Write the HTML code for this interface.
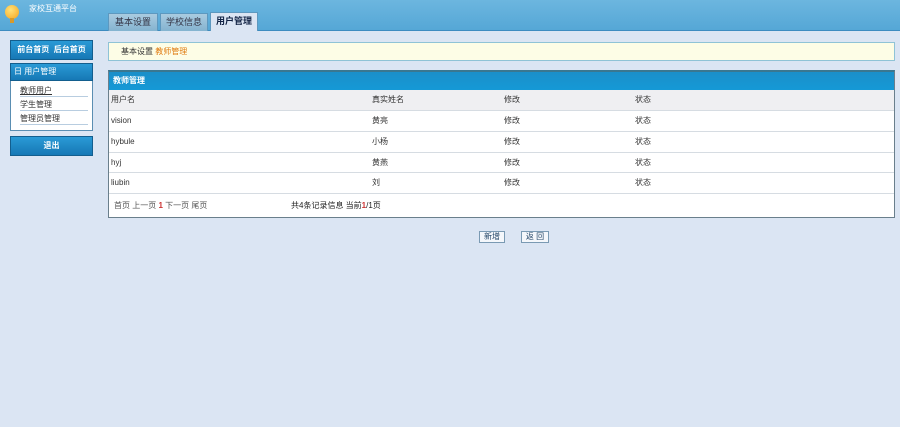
<!DOCTYPE html>
<html><head><meta charset="utf-8"><style>
*{margin:0;padding:0;box-sizing:border-box}
body{width:900px;height:427px;background:#dbe5f3;font-family:"Liberation Sans","Noto Sans CJK SC",sans-serif;font-size:8px;color:#333;position:relative;overflow:hidden}
.a{position:absolute}
.top{left:0;top:0;width:900px;height:31px;background:linear-gradient(#6cb6df,#55a7d6);border-bottom:1px solid #3d8cc0}
.tab{top:13px;height:18px;background:linear-gradient(#a9cbe0,#84b3d0);border:1px solid #5d98bf;border-bottom:none;color:#334;font-size:9px;text-align:center;line-height:17px}
.tab.on{background:#dbe5f3;color:#124;font-weight:bold}
.bbtn{background:linear-gradient(#2a9ad6,#1678b5);color:#fff;font-weight:bold;text-align:center;border:1px solid #135e8e}
.tbl{left:108px;top:70px;width:787px;height:148px;background:#fff;border:1px solid #6a7f8c;border-top:2px solid #3a7790}
.row{position:absolute;left:0;width:785px;border-bottom:1px solid #d6dce2}
.row span{position:absolute;top:0}
.btn{top:231px;height:12px;border:1px solid #7a9ab3;background:#f4f7fb;color:#246;text-align:center;line-height:10px;font-size:8px}
</style></head><body>
<div class="a top"></div>
<div class="a" style="left:5px;top:5px;width:14px;height:14px;border-radius:50%;background:radial-gradient(circle at 40% 35%,#ffe27a,#f4a21c)"></div>
<div class="a" style="left:10px;top:18px;width:4px;height:5px;background:#d89a2a"></div>
<div class="a" style="left:29px;top:3px;color:#fff;font-size:8px">家校互通平台</div>
<div class="a tab" style="left:108px;width:50px">基本设置</div>
<div class="a tab" style="left:160px;width:48px">学校信息</div>
<div class="a tab on" style="left:210px;width:48px;top:12px;height:19px">用户管理</div>

<div class="a bbtn" style="left:10px;top:40px;width:83px;height:20px;line-height:18px">前台首页&nbsp; 后台首页</div>
<div class="a" style="left:10px;top:63px;width:83px;height:68px;background:#fff;border:1px solid #5a8eb2"></div>
<div class="a bbtn" style="left:10px;top:63px;width:83px;height:18px;line-height:16px;text-align:left;padding-left:3px;font-weight:normal">日 用户管理</div>
<div class="a" style="left:20px;top:85px;width:68px;border-bottom:1px solid #b8cde0;height:12px;text-decoration:underline">教师用户</div>
<div class="a" style="left:20px;top:99px;width:68px;border-bottom:1px solid #b8cde0;height:12px">学生管理</div>
<div class="a" style="left:20px;top:113px;width:68px;border-bottom:1px solid #b8cde0;height:12px">管理员管理</div>
<div class="a bbtn" style="left:10px;top:136px;width:83px;height:20px;line-height:18px">退出</div>

<div class="a" style="left:108px;top:42px;width:787px;height:19px;background:#fdfde6;border:1px solid #8fc3d6;line-height:17px;padding-left:12px">基本设置 <span style="color:#e07a10">教师管理</span></div>

<div class="a tbl">
<div class="row" style="top:0;height:18px;background:linear-gradient(#1b8fc9,#1599d6);border:none;color:#fff;font-weight:bold;line-height:17px;padding-left:4px">教师管理</div>
<div class="row" style="top:18px;height:21px;background:#efeff2;line-height:20px"><span style="left:2px">用户名</span><span style="left:263px">真实姓名</span><span style="left:395px">修改</span><span style="left:526px">状态</span></div>
<div class="row" style="top:39px;height:21px;line-height:20px"><span style="left:2px">vision</span><span style="left:263px">黄亮</span><span style="left:395px">修改</span><span style="left:526px">状态</span></div>
<div class="row" style="top:60px;height:21px;line-height:20px"><span style="left:2px">hybule</span><span style="left:263px">小杨</span><span style="left:395px">修改</span><span style="left:526px">状态</span></div>
<div class="row" style="top:81px;height:20px;line-height:20px"><span style="left:2px">hyj</span><span style="left:263px">黄燕</span><span style="left:395px">修改</span><span style="left:526px">状态</span></div>
<div class="row" style="top:101px;height:21px;line-height:20px"><span style="left:2px">liubin</span><span style="left:263px">刘</span><span style="left:395px">修改</span><span style="left:526px">状态</span></div>
<div class="row" style="top:122px;height:24px;border:none;line-height:24px;color:#555"><span style="left:5px">首页 上一页 <b style="color:#c33">1</b> 下一页 尾页</span><span style="left:182px;color:#222">共4条记录信息 当前<b style="color:#c33">1</b>/1页</span></div>
</div>

<div class="a btn" style="left:479px;width:26px">新增</div>
<div class="a btn" style="left:521px;width:28px">返 回</div>
</body></html>
